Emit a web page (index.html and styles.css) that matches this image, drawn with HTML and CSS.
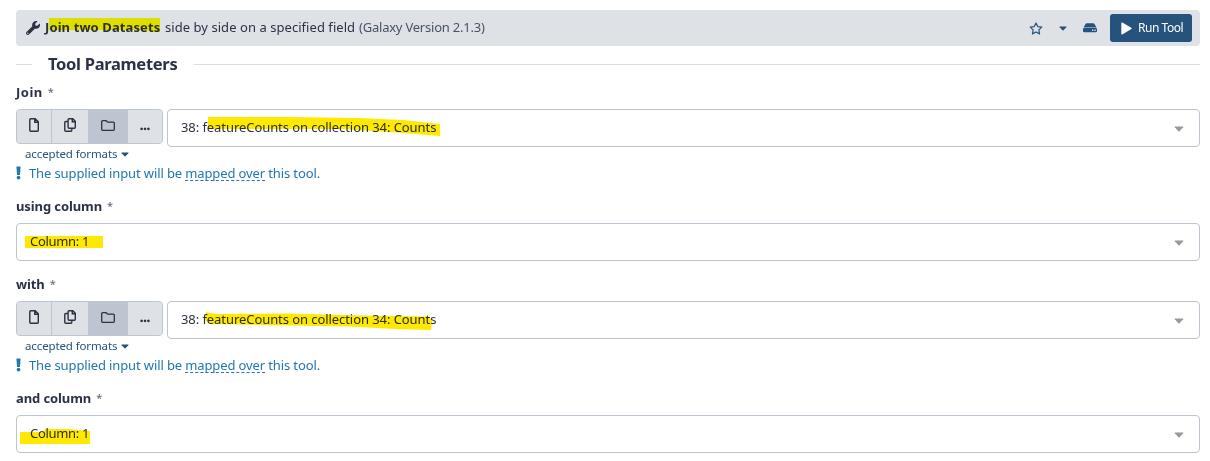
FILE: index.html
```html
<!DOCTYPE html>
<html lang="en">
<head>
<meta charset="utf-8">
<title>Join two Datasets</title>
<link rel="stylesheet" href="styles.css">
</head>
<body>
<svg class="defs" width="0" height="0">
  <symbol id="file" viewBox="0 0 10 14"><path d="M1.7.8h4.5l3.1 3.1v8.4a.9.9 0 0 1-.9.9H1.7a.9.9 0 0 1-.9-.9V1.7a.9.9 0 0 1 .9-.9ZM5.8 1v3.3h3.4" fill="none" stroke="currentColor" stroke-width="1.4"/></symbol>
  <symbol id="copy" viewBox="0 0 12 14"><path d="M5 .8h3.8l2.5 2.5v6a.9.9 0 0 1-.9.9H5a.9.9 0 0 1-.9-.9V1.7A.9.9 0 0 1 5 .8ZM8.3 1v2.8h2.9M4 3.5H1.7a.9.9 0 0 0-.9.9v7.9a.9.9 0 0 0 .9.9h5.2a.9.9 0 0 0 .9-.9v-2" fill="none" stroke="currentColor" stroke-width="1.4"/></symbol>
  <symbol id="folder" viewBox="0 0 14 11"><path d="M1.7.7h3.4l1.5 1.5h5.7a1 1 0 0 1 1 1v6.1a1 1 0 0 1-1 1H1.7a1 1 0 0 1-1-1V1.7a1 1 0 0 1 1-1Z" fill="none" stroke="currentColor" stroke-width="1.3"/></symbol>
  <symbol id="dots" viewBox="0 0 10 4"><path d="M1.6.6a1.3 1.3 0 1 0 .01 0ZM5 .6a1.3 1.3 0 1 0 .01 0ZM8.4.6a1.3 1.3 0 1 0 .01 0Z" fill="currentColor"/></symbol>
  <symbol id="caret" viewBox="0 0 10 6"><path d="M1 .5h8q.7.1.2.8L5.6 5.2q-.6.5-1.2 0L.8 1.3Q.3.6 1 .5Z" fill="currentColor"/></symbol>
  <symbol id="bang" viewBox="0 0 5 14"><path d="M.9.5h3.2q.5 0 .5.6L4 8.4q0 .5-.5.5h-2q-.5 0-.5-.5L.4 1.1Q.4.5.9.5ZM2.5 9.8a1.85 1.85 0 1 0 .01 0Z" fill="currentColor"/></symbol>
</svg>
<main class="form">
  <header class="toolbar">
    <svg class="wrench" viewBox="0 0 512 512"><path fill="currentColor" d="M507.700 109.100c-2.200-9-13.500-12.100-20.100-5.500l-74.400 74.400-67.900-11.300L334 98.900l74.400-74.400c6.600-6.600 3.400-17.900-5.700-20.200-47.400-11.700-99.600.9-136.600 37.900-39.600 39.600-50.500 97.100-34.100 147.200L18.700 402.800c-25 25-25 65.500 0 90.500s65.500 25 90.500 0l213.200-213.200c50.100 16.700 107.500 5.700 147.400-34.200 37.100-37.100 49.700-89.300 37.900-136.800zM64 472c-13.200 0-24-10.800-24-24s10.700-24 24-24 24 10.700 24 24-10.700 24-24 24z"/></svg>
    <h1 class="tool-title"><b class="name">Join two Datasets</b><span class="desc">side by side on a specified field</span><span class="version">(Galaxy Version 2.1.3)</span>
      <svg class="mark mark-title" viewBox="0 0 112 14"><path d="M0 0H111V14L91 12H0Z"/></svg>
    </h1>
    <div class="actions">
      <svg class="star" viewBox="0 0 14 13"><path d="M7 1l1.75 3.6 4 .55-2.9 2.75.7 3.95L7 9.95l-3.55 1.9.7-3.95-2.9-2.75 4-.55Z" fill="none" stroke="currentColor" stroke-width="1.2" stroke-linejoin="round"/></svg>
      <svg class="caret star-caret"><use href="#caret"/></svg>
      <svg class="drive" viewBox="0 0 14 10"><path fill="currentColor" d="M3.600.3h6.800q.6 0 .9.500l2.200 3.600H.5L2.700.8Q3 .3 3.600.3ZM1.200 5.100h11.600q1.200 0 1.200 1.100v2q0 1.100-1.200 1.100H1.200Q0 9.300 0 8.200v-2q0-1.100 1.200-1.100Z"/><path d="M9 6.600h1.300v1.300H9zM11.400 6.600h1.300v1.300h-1.300z" fill="#dee2e6"/></svg>
      <button class="run"><svg class="play" viewBox="0 0 11 13"><path d="M.3 1.200Q.3.100 1.300.6l9 5.200q.8.600 0 1.300l-9 5.300q-1 .4-1-.7Z" fill="currentColor"/></svg><span>Run Tool</span></button>
    </div>
  </header>
  <h2 class="section"><span>Tool Parameters</span></h2>

  <section class="field">
    <label class="label"><b class="l-join">Join</b><i>*</i></label>
    <div class="data-row">
      <div class="sources">
        <button class="source"><svg class="file"><use href="#file"/></svg></button>
        <button class="source"><svg class="copy"><use href="#copy"/></svg></button>
        <button class="source active"><svg class="folder"><use href="#folder"/></svg></button>
        <button class="source"><svg class="dots"><use href="#dots"/></svg></button>
      </div>
      <div class="select"><span class="dataset">38: featureCounts on collection 34: Counts</span><svg class="caret arrow"><use href="#caret"/></svg>
        <svg class="mark mark-join" viewBox="0 0 232 19"><path d="M0 0H80L150 1 195 3 232 7V19L195 16 135 12H0Z"/></svg>
      </div>
    </div>
    <a class="formats"><span>accepted formats</span><svg class="caret"><use href="#caret"/></svg></a>
    <p class="message"><svg class="bang"><use href="#bang"/></svg><span>The supplied input will be <u>mapped over</u> this tool.</span></p>
  </section>

  <section class="field">
    <label class="label"><b class="l-using">using column</b><i>*</i></label>
    <div class="select"><span class="column">Column: 1</span><svg class="caret arrow"><use href="#caret"/></svg>
      <svg class="mark mark-using" viewBox="0 0 78 12"><path d="M0 0H78V12H0Z"/></svg>
    </div>
  </section>

  <section class="field">
    <label class="label"><b class="l-with">with</b><i>*</i></label>
    <div class="data-row">
      <div class="sources">
        <button class="source"><svg class="file"><use href="#file"/></svg></button>
        <button class="source"><svg class="copy"><use href="#copy"/></svg></button>
        <button class="source active"><svg class="folder"><use href="#folder"/></svg></button>
        <button class="source"><svg class="dots"><use href="#dots"/></svg></button>
      </div>
      <div class="select"><span class="dataset">38: featureCounts on collection 34: Counts</span><svg class="caret arrow"><use href="#caret"/></svg>
        <svg class="mark mark-with" viewBox="0 0 227 18"><path d="M1 0 11 2 80 1.500 160 3.500 223 4.500 227 8 226 18 190 17 145 14.500 60 13 5 12 0 8Z"/></svg>
      </div>
    </div>
    <a class="formats"><span>accepted formats</span><svg class="caret"><use href="#caret"/></svg></a>
    <p class="message"><svg class="bang"><use href="#bang"/></svg><span>The supplied input will be <u>mapped over</u> this tool.</span></p>
  </section>

  <section class="field">
    <label class="label"><b class="l-and">and column</b><i>*</i></label>
    <div class="select"><span class="column">Column: 1</span><svg class="caret arrow"><use href="#caret"/></svg>
      <svg class="mark mark-and" viewBox="0 0 70 15"><path d="M0 3H23L25 0 48 0 70 2V15H0Z"/></svg>
    </div>
  </section>
</main>
</body>
</html>
```
FILE: styles.css
```css
* { box-sizing: border-box; }
body { margin: 0; background: #fff; color: #2c3143; font: 13px/20px "Noto Sans", sans-serif; }
.defs { position: absolute; }
svg { display: block; flex: none; }
h1, h2, p { margin: 0; font-size: inherit; font-weight: normal; }
button { font: inherit; color: inherit; margin: 0; padding: 0; border: 0; }
.form { width: 1184px; margin: 10px 0 0 16px; }
.toolbar { display: flex; align-items: center; height: 36px; padding: 0 8px 0 10px; background: #dee2e6; border-radius: 4px; }
.wrench { width: 14px; height: 14px; }
.tool-title { position: relative; top: -1px; display: flex; margin-left: 5px; white-space: nowrap; }
.name { width: 120px; letter-spacing: 0.1px; }
.desc { width: 194px; letter-spacing: 0.05px; }
.version { color: #495167; letter-spacing: -0.22px; }
.actions { display: flex; align-items: center; margin-left: auto; color: #25537b; }
.star { width: 14px; height: 13px; }
.caret { width: 8px; height: 5px; }
.star-caret { margin: 0 16px 0 16px; }
.drive { width: 14px; height: 10px; margin-right: 13px; }
.run { display: flex; align-items: center; width: 82px; height: 28px; padding-left: 11px; gap: 6px; border-radius: 3px; background: #25537b; color: #fff; font-size: 12px; letter-spacing: -0.45px; white-space: nowrap; }
.play { width: 11px; height: 13px; }
.section { display: flex; align-items: center; height: 35px; gap: 16px; font-size: 16.500px; letter-spacing: -0.3px; font-weight: bold; white-space: nowrap; }
.section::before, .section::after { content: ""; height: 1px; margin-top: 2px; background: #dcdee1; }
.section::before { width: 16px; }
.section::after { flex: 1; }
.section span { width: 130px; }
.field { margin-bottom: 12px; }
.label { display: flex; height: 28px; padding-top: 1px; gap: 5px; letter-spacing: -0.1px; }
.label .l-join { letter-spacing: 0.5px; }
.label i { font-style: normal; font-size: 11px; color: #5b6277; }
.data-row { display: flex; align-items: flex-start; gap: 4px; }
.sources { display: flex; width: 147px; height: 35px; border: 1px solid #bdc6d0; border-radius: 4px; overflow: hidden; background: #dee2e6; }
.source { display: flex; justify-content: center; align-items: center; width: 35px; padding-bottom: 3px; background: #dee2e6; border-right: 1px solid #bdc6d0; }
.source:nth-child(2) { width: 37px; }
.source.active { width: 39px; background: #bdc6d0; }
.source:last-child { width: 34px; border: 0; padding: 5px 0 0; }
.file { width: 10px; height: 14px; }
.copy { width: 12px; height: 14px; }
.folder { width: 14px; height: 11px; }
.dots { width: 10px; height: 4px; }
.select { position: relative; display: flex; align-items: center; flex: 1; height: 38px; padding: 0 15px 0 13px; border: 1px solid #bdc6d0; border-radius: 4px; white-space: nowrap; }
.arrow { width: 10px; height: 6px; margin: 2px 0 0 auto; color: #999; }
.select span { margin-top: -2px; }
.dataset { letter-spacing: -0.07px; }
.column { letter-spacing: -0.3px; }
.formats { display: flex; align-items: center; height: 16px; margin-top: -1px; padding-left: 9px; gap: 4px; font-size: 11.500px; letter-spacing: -0.12px; color: #25537b; }
.message { display: flex; align-items: center; height: 22px; margin-bottom: -1px; gap: 8px; letter-spacing: -0.12px; color: #2077b3; white-space: nowrap; }
.field:has(.message) { margin-bottom: 12px; display: flow-root; }
.bang { width: 5px; height: 14px; }
.message u { text-decoration: none; border-bottom: 1px dashed #2077b3; line-height: 14px; display: inline-block; }
.mark { position: absolute; fill: #ffe900; mix-blend-mode: multiply; }
.mark-title { left: 4px; top: 1px; width: 112px; height: 14px; fill: #fffb00; }
.mark-join { left: 40px; top: 7px; width: 232px; height: 19px; }
.mark-using { left: 8px; top: 12px; width: 78px; height: 12px; }
.mark-with { left: 37px; top: 10px; width: 227px; height: 18px; }
.mark-and { left: 3px; top: 13px; width: 70px; height: 15px; }
```
